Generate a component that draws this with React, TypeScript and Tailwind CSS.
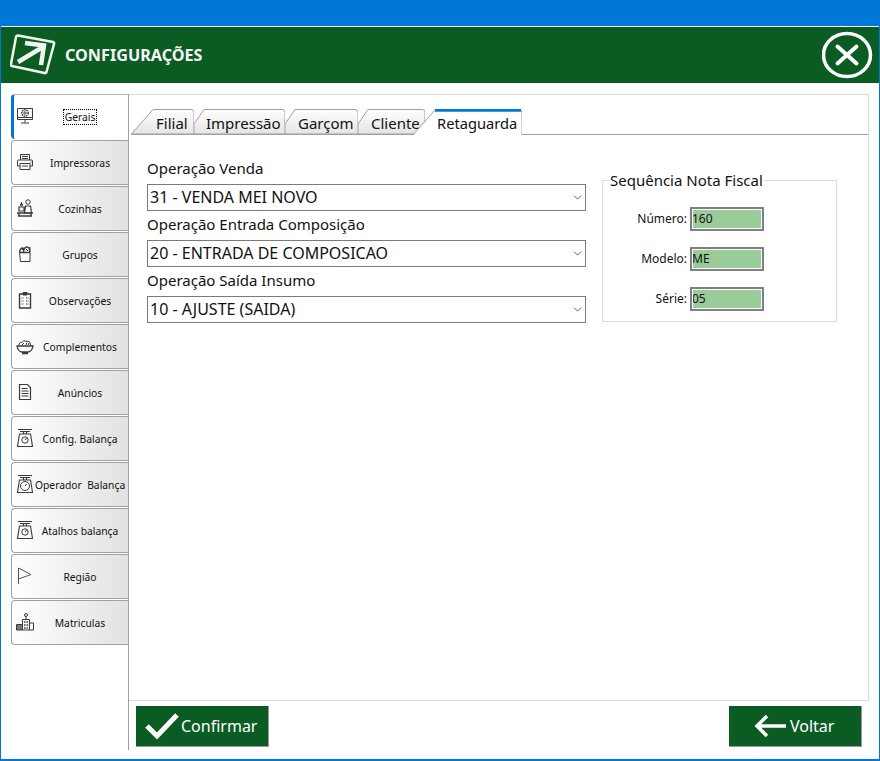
import { ChevronDown } from "lucide-react";
import type { ReactNode } from "react";

// icones do menu, todos em caixa 20x20
const Icon = ({ children, y = 0 }: { children: ReactNode; y?: number }) => (
  <svg width="20" height="20" viewBox={`0 ${y} 20 20`} fill="none" stroke="#3a3a3a" strokeWidth="1">
    {children}
  </svg>
);

const GeraisIcon = () => (
  <Icon>
    <path d="M2.5 2.5h15v11h-15zM2.5 11.5h15M10 13.5v3M6 17h8" />
    <circle cx="10" cy="7" r="3.2" strokeWidth="1.4" strokeDasharray="1.6 0.7" />
    <circle cx="10" cy="7" r="1.2" />
  </Icon>
);

const PrinterIcon = () => (
  <Icon>
    <path d="M5.5 8V2.5h9V8M7 4.5h6M7 6.5h6" />
    <path d="M5 14H2.5V9q0-1 1-1h13q1 0 1 1v5H15" />
    <path d="M5 11.5h10v6H5zM7 14h6M15.5 10h1" />
  </Icon>
);

const KitchenIcon = () => (
  <Icon>
    <circle cx="13" cy="4" r="2.2" />
    <path d="M10.5 8h5l1 7h-7zM6.5 4v3M4 9h5v4H4z" strokeWidth="1.2" />
    <path d="M2 15h16M3 18h14M4 15v3M16 15v3" strokeWidth="1.4" />
    <circle cx="6.5" cy="7" r="1.2" />
  </Icon>
);

const BagIcon = () => (
  <Icon>
    <path d="M4.5 8.5l1 9h9.5V3" />
    <path d="M4.5 8.5Q5 4 8 4q1 2 .5 4.5M8.5 8.5Q9 3 12 3t2.5 5.5M4.5 8.5h10" strokeWidth="1.3" />
    <path d="M7 6l2-2M11 5l2 2" />
  </Icon>
);

const ClipboardIcon = () => (
  <Icon>
    <path d="M4.5 4h11v14h-11z" strokeWidth="1.4" />
    <path d="M8 2.5h4V5H8z" fill="#3a3a3a" />
    <path d="M6.5 8h2M11 8h3M6.5 11h2M11 11h3M6.5 14h2M11 14h3" strokeDasharray="1 .5" />
  </Icon>
);

const BowlIcon = () => (
  <Icon>
    <path d="M2 10h16Q17 15.5 13 16H7Q3 15.5 2 10zM7 17.5h6" strokeWidth="1.3" />
    <path d="M4 10Q3.500 6 7 6.500 8.500 3 11 5.500 15 3.500 16 10" />
    <path d="M7 9l2-2M11 9l1-2.500M13.500 9l.5-2" />
  </Icon>
);

const DocIcon = () => (
  <Icon>
    <path d="M4.500 2.500h8l3 3v12h-11z" strokeWidth="1.200" />
    <path d="M6.500 6.500h6M6.500 9h7M6.500 11.500h7M6.500 14h7" />
  </Icon>
);

const ScaleIcon = ({ dial }: { dial?: boolean }) => (
  <Icon>
    <path d="M3 1.500h14M5 3.500h10M8.500 3.500v2.500M11.500 3.500v2.500" strokeWidth="1.200" />
    <path d="M4.500 6h11l2 12.500h-15z" strokeWidth="1.100" />
    <circle cx="10" cy="12" r={dial ? 4.500 : 3.200} />
    <path d="M10 12l1.500-2" />
  </Icon>
);

const FlagIcon = () => (
  <svg width="16" height="20" viewBox="0 0 16 20" fill="none" stroke="#555" strokeWidth="1">
    <path d="M1.500 18V2L14 8.500 1.500 13" />
  </svg>
);

const RegisterIcon = () => (
  <Icon>
    <circle cx="11" cy="3" r="1.500" />
    <path d="M11 4.500v3M7.500 7.500h7V18h-7z" />
    <path d="M9 10h4M9 13h4M9 16h4" strokeWidth="1.400" strokeDasharray="1 .5" />
    <path d="M1.500 12.500h6V18h-6z" fill="#777" />
    <path d="M14.500 11h4v7h-4z" />
  </Icon>
);

const items: { label: string; icon: ReactNode }[] = [
  { label: "Gerais", icon: <GeraisIcon /> },
  { label: "Impressoras", icon: <PrinterIcon /> },
  { label: "Cozinhas", icon: <KitchenIcon /> },
  { label: "Grupos", icon: <BagIcon /> },
  { label: "Observações", icon: <ClipboardIcon /> },
  { label: "Complementos", icon: <BowlIcon /> },
  { label: "Anúncios", icon: <DocIcon /> },
  { label: "Config. Balança", icon: <ScaleIcon /> },
  { label: "Operador  Balança", icon: <ScaleIcon dial /> },
  { label: "Atalhos balança", icon: <ScaleIcon /> },
  { label: "Região", icon: <FlagIcon /> },
  { label: "Matriculas", icon: <RegisterIcon /> },
];

const tabs = [
  { label: "Filial", w: "w-[63px]", vw: 63, pl: "pl-[25px]", d: "M0.500 25 L22 0.500 H60 Q63 0.500 63 3 V25 Z" },
  { label: "Impressão", w: "w-[91px]", vw: 91, pl: "pl-[12px]", d: "M0 15 L10 0.500 H88 Q91 0.500 91 3 V25 H0 Z" },
  { label: "Garçom", w: "w-[73px]", vw: 73, pl: "pl-[13px]", d: "M0 15 L10 0.500 H70 Q73 0.500 73 3 V25 H0 Z" },
  { label: "Cliente", w: "w-[67px]", vw: 67, pl: "pl-[13px]", d: "M0 15 L10 0.500 H64 Q67 0.500 67 3 V25 H0 Z" },
];

function Field({ label, value }: { label: string; value: string }) {
  return (
    <div className="flex flex-col">
      <span className="h-[29px] text-[15px] leading-[27px] text-[#111]">{label}</span>
      <div className="flex h-[27px] w-[439px] items-center justify-between border border-[#7a7a7a] bg-white pb-[2px] pl-[2px] pr-px text-[16px] text-[#111]">
        <span>{value}</span>
        <ChevronDown size={13} strokeWidth={1.500} color="#444" className="mt-[2px]" />
      </div>
    </div>
  );
}

function SeqRow({ label, value }: { label: string; value: string }) {
  return (
    <div className="flex h-[24px] items-center justify-end">
      <span className="mr-[3px] text-[12px] text-[#111]">{label}</span>
      <div className="flex h-[24px] w-[74px] items-center border-2 border-[#808080] bg-[#99cc99] text-[12px] text-[#111] outline outline-1 -outline-offset-3 outline-white">
        {value}
      </div>
    </div>
  );
}

export default function App() {
  return (
    <div
      className="flex h-[761px] w-[880px] flex-col overflow-hidden border-x border-b-2 border-[#0078d7] bg-white"
      style={{ fontFamily: '"Noto Sans", "Open Sans", sans-serif' }}
    >
      <div className="h-[26px] shrink-0 bg-[#0078d7]" />
      {/* cabecalho */}
      <div className="mt-px flex h-[56px] shrink-0 items-center justify-between bg-[#0b5c22] pl-[9px] pr-[5px]">
        <div className="flex items-center gap-[9px]">
          <svg width="46" height="42" viewBox="0 0 46 42" fill="none" stroke="#f0f5f0">
            <path d="M8 1.500 L43 8 Q44.500 8.500 44 10 L36.500 38 Q36 39.500 34.500 39 L2 32 Q0.500 31.500 1 30 L6 3 Q6.500 1.500 8 1.500 Z" strokeWidth="2.500" />
            <path d="M8 28 L32 13.500 M15 9 L34 11.500 L31 31" strokeWidth="4.500" />
          </svg>
          <span className="text-[16.200px] font-bold text-[#f5f5f5]">CONFIGURAÇÕES</span>
        </div>
        <svg width="52" height="48" viewBox="0 0 52 48" fill="none" stroke="white">
          <ellipse cx="25" cy="24" rx="23.500" ry="21.500" strokeWidth="3.500" />
          <path d="M15.500 15.500 L34.500 32.500 M34.500 15.500 L15.500 32.500" strokeWidth="4" strokeLinecap="round" />
        </svg>
      </div>

      <div className="flex min-h-0 flex-1 px-[10px] pb-[9px] pt-[11px]">
        {/* menu lateral */}
        <div className="flex w-[117px] shrink-0 flex-col gap-px">
          {items.map((item, i) => (
            <div
              key={item.label}
              className={`flex h-[45px] items-center rounded-l-[4px] ${
                i === 0
                  ? "border-t border-l-[3px] border-t-[#bbb] border-l-[#0078d7] bg-white pl-px"
                  : "border border-r-0 border-[#a0a0a0] bg-gradient-to-r from-white to-[#e2e2e2] pl-[3px]"
              }`}
            >
              <span className="flex w-[20px] shrink-0 justify-center pb-[2px]">{item.icon}</span>
              <span className="flex-1 whitespace-pre pr-[3px] pt-[2px] text-center text-[10.300px] text-[#111]">
                {i === 0 ? (
                  <span className="border border-dotted border-black px-px">{item.label}</span>
                ) : (
                  item.label
                )}
              </span>
            </div>
          ))}
        </div>

        {/* painel */}
        <div className="flex min-w-0 flex-1 flex-col border-l border-[#a0a0a0]">
          <div className="flex h-[607px] flex-col border-y border-r border-[#dcdcdc] pl-[2px] pt-[14px]">
            <div className="flex h-[26px] border-b border-[#a0a0a0]">
              <svg width="0" height="0" className="absolute">
                <defs>
                  <linearGradient id="tabFill" x1="0" y1="0" x2="0" y2="1">
                    <stop offset="0" stopColor="#ffffff" />
                    <stop offset="1" stopColor="#e4e4e4" />
                  </linearGradient>
                </defs>
              </svg>
              {tabs.map((tab) => (
                <div key={tab.label} className={`relative h-[25px] ${tab.w}`}>
                  <svg className="absolute inset-0 h-full w-full" viewBox={`0 0 ${tab.vw} 25`} fill="url(#tabFill)" stroke="#a0a0a0">
                    <path d={tab.d} />
                  </svg>
                  <span className={`relative block ${tab.pl} text-[15px] leading-[28px] text-[#111]`}>{tab.label}</span>
                </div>
              ))}
              <div className="relative -ml-[12px] h-[26px] w-[109px]">
                <svg className="absolute inset-0 h-full w-full" viewBox="0 0 109 26" fill="white" stroke="#a0a0a0">
                  <path d="M0 26 L22 1 H106 Q109 1 109 4 V26" />
                  <path d="M22 1.200 H108" stroke="#0078d7" strokeWidth="3" />
                </svg>
                <span className="relative block pl-[24px] text-[14.700px] leading-[28px] text-[#111]">Retaguarda</span>
              </div>
            </div>
            <div className="flex pl-[16px] pt-[20px]">
              <div className="flex flex-col">
                <Field label="Operação Venda" value="31 - VENDA MEI NOVO" />
                <Field label="Operação Entrada Composição" value="20 - ENTRADA DE COMPOSICAO" />
                <Field label="Operação Saída Insumo" value="10 - AJUSTE (SAIDA)" />
              </div>
              <div className="relative ml-[16px] mt-[25px] flex h-[142px] w-[235px] flex-col gap-[16px] border border-[#dcdcdc] pr-[72px] pt-[26px]">
                <span className="absolute -top-[10px] left-[7px] bg-white pr-px text-[15px] leading-[18px] text-[#111]">Sequência Nota Fiscal</span>
                <SeqRow label="Número:" value="160" />
                <SeqRow label="Modelo:" value="ME" />
                <SeqRow label="Série:" value="05" />
              </div>
            </div>
          </div>
          {/* rodape */}
          <div className="flex justify-between pl-[7px] pr-[7px] pt-[5px]">
            <div className="flex h-[41px] w-[133px] items-center border-r border-b border-[#999] bg-[#0b5c22] pl-[8px] text-[16px] text-white">
              <svg width="36" height="28" viewBox="0 0 36 28" fill="none" stroke="white" strokeWidth="5" className="mr-px">
                <path d="M3 14 L13 24 L33 3" />
              </svg>
              Confirmar
            </div>
            <div className="flex h-[41px] w-[133px] items-center border-r border-b border-[#999] bg-[#0b5c22] pl-[25px] text-[16px] text-white">
              <svg width="32" height="24" viewBox="0 0 32 24" fill="none" stroke="white" strokeWidth="3.500" className="mr-[4px]">
                <path d="M32 12 H3 M13 2 L3 12 L13 22" />
              </svg>
              Voltar
            </div>
          </div>
        </div>
      </div>
    </div>
  );
}
